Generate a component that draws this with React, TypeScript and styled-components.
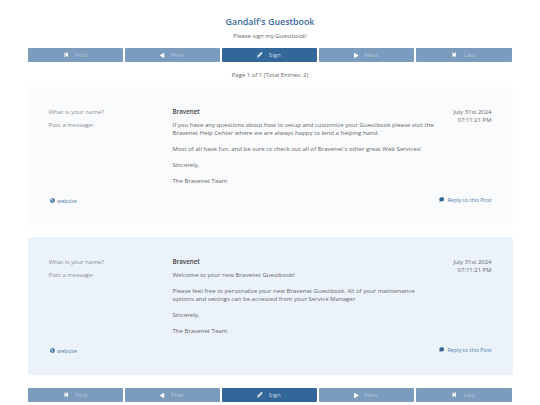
import React from "react";
import styled, { createGlobalStyle } from "styled-components";
import { FaStepBackward, FaStepForward, FaPlay, FaPencilAlt, FaGlobeAmericas, FaComment } from "react-icons/fa";

const Global = createGlobalStyle`
  html, body { margin: 0; padding: 0; background: #fff; }
  body { font-family: "Open Sans", "Liberation Sans", sans-serif; color: #555; }
`;

const Page = styled.div`
  width: 540px;
  height: 405px;
  box-sizing: border-box;
  padding: 16px 27.5px 0 27.5px;
  overflow: hidden;
`;

const Title = styled.h1`
  margin: 0;
  height: 12px;
  font-size: 8.9px;
  line-height: 12px;
  font-weight: 600;
  text-align: center;
  color: #3a6a9c;
`;

const Subtitle = styled.p`
  margin: 4px 0 0;
  font-size: 5.95px;
  line-height: 8px;
  text-align: center;
  color: #666;
`;

const Nav = styled.nav<{ $top: number }>`
  display: grid;
  grid-template-columns: 95px 95px 95px 95px 96px;
  gap: 2px;
  margin-top: ${(p) => p.$top}px;
`;

const NavButton = styled.a<{ $active?: boolean }>`
  height: 14px;
  display: flex;
  align-items: center;
  justify-content: center;
  gap: 6px;
  border-radius: 1px;
  font-size: 6.05px;
  color: ${(p) => (p.$active ? "#c9d8e8" : "#b5c8dc")};
  background: ${(p) => (p.$active ? "#336699" : "#7b9cbd")};
  svg { height: 5.5px; color: #fff; flex: none; }
`;

const StepIcon = styled.span`
  display: flex;
  svg { width: 6.5px; }
`;

const ArrowIcon = styled.span<{ $flip?: boolean }>`
  display: flex;
  transform: ${(p) => (p.$flip ? "scaleX(-1)" : "none")};
  svg { width: 4.5px; height: 5px; }
`;

const PenIcon = styled.span`
  display: flex;
  svg { width: 5.5px; }
`;

const PageInfo = styled.p`
  margin: 9px 0 8px;
  font-size: 5.95px;
  line-height: 8px;
  text-align: center;
  color: #666;
`;

const Card = styled.article<{ $alt?: boolean }>`
  height: 138px;
  box-sizing: border-box;
  padding: 21px 21px 0;
  margin-bottom: 12px;
  border-radius: 2px;
  background: ${(p) => (p.$alt ? "#ebf2f9" : "#f9fbfd")};
  display: flex;
  flex-direction: column;
`;

const Columns = styled.div`
  display: grid;
  grid-template-columns: 124px 264px 1fr;
  height: 88px;
`;

const Labels = styled.div`
  display: flex;
  flex-direction: column;
  gap: 5px;
  font-size: 6.07px;
  line-height: 8px;
  color: #8a8f94;
`;

const Author = styled.div`
  font-size: 6.2px;
  line-height: 8px;
  font-weight: 600;
  color: #444;
  margin-bottom: 5px;
`;

const Body = styled.div`
  font-size: 6.07px;
  line-height: 8px;
  color: #666;
  p { margin: 0 0 8px; }
`;

const DateBox = styled.div`
  font-size: 5.95px;
  line-height: 8px;
  text-align: right;
  color: #666;
  white-space: nowrap;
`;

const Footer = styled.div`
  display: flex;
  justify-content: space-between;
  align-items: flex-start;
  height: 8px;
  font-size: 5.5px;
  line-height: 8px;
  color: #4f7aa5;
`;

const WebsiteLink = styled.a`
  display: flex;
  align-items: center;
  gap: 2.5px;
  padding: 0.5px 0 0 1px;
  svg { width: 5px; height: 5px; color: #336699; }
`;

const ReplyLink = styled.a`
  display: flex;
  align-items: center;
  gap: 3px;
  margin-top: -0.5px;
  svg { width: 5.5px; height: 5px; color: #336699; }
`;

const buttons = [
  { label: "First", icon: <StepIcon><FaStepBackward /></StepIcon> },
  { label: "Prev", icon: <ArrowIcon $flip><FaPlay /></ArrowIcon> },
  { label: "Sign", icon: <PenIcon><FaPencilAlt /></PenIcon>, active: true },
  { label: "Next", icon: <ArrowIcon><FaPlay /></ArrowIcon> },
  { label: "Last", icon: <StepIcon><FaStepForward /></StepIcon> },
];

const entries = [
  {
    paragraphs: [
      "If you have any questions about how to setup and customize your Guestbook please visit the Bravenet Help Center where we are always happy to lend a helping hand.",
      "Most of all have fun, and be sure to check out all of Bravenet's other great Web Services!",
      "Sincerely,",
      "The Bravenet Team",
    ],
  },
  {
    alt: true,
    paragraphs: [
      "Welcome to your new Bravenet Guestbook!",
      "Please feel free to personalize your new Bravenet Guestbook. All of your maintenance options and settings can be accessed from your Service Manager.",
      "Sincerely,",
      "The Bravenet Team",
    ],
  },
];

const NavBar = ({ top }: { top: number }) => (
  <Nav $top={top}>
    {buttons.map((b) => (
      <NavButton key={b.label} $active={b.active}>
        {b.icon}
        <span>{b.label}</span>
      </NavButton>
    ))}
  </Nav>
);

export default function App() {
  return (
    <Page>
      <Global />
      <Title>Gandalf's Guestbook</Title>
      <Subtitle>Please sign my Guestbook!</Subtitle>
      <NavBar top={8} />
      <PageInfo>Page 1 of 1 (Total Entries: 2)</PageInfo>
      {entries.map((e, i) => (
        <Card key={i} $alt={e.alt}>
          <Columns>
            <Labels>
              <span>What is your name?</span>
              <span>Post a message:</span>
            </Labels>
            <div>
              <Author>Bravenet</Author>
              <Body>
                {e.paragraphs.map((t) => (
                  <p key={t}>{t}</p>
                ))}
              </Body>
            </div>
            <DateBox>
              July 31st 2024
              <br />
              07:11:21 PM
            </DateBox>
          </Columns>
          <Footer>
            <WebsiteLink><FaGlobeAmericas />website</WebsiteLink>
            <ReplyLink><FaComment />Reply to this Post</ReplyLink>
          </Footer>
        </Card>
      ))}
      <NavBar top={13} />
    </Page>
  );
}
